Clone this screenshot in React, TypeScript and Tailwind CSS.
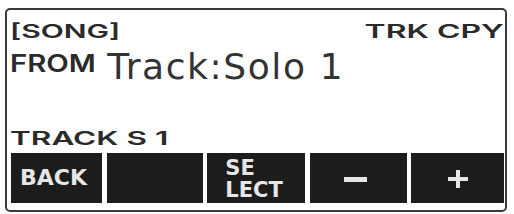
export default function App() {
  const lcd = { fontFamily: '"DejaVu Sans", "Liberation Sans", sans-serif' };
  const thin = { fontFamily: 'Inter, "DejaVu Sans", sans-serif' };

  return (
    <div className="w-[514px] h-[214px] bg-white overflow-hidden" style={lcd}>
      <div className="ml-[5px] mt-[8px] w-[502px] h-[204px] border-2 border-[#3a3a3a] rounded-[5px] flex flex-col pl-[3px] pr-[1px] text-[#2a2a2a]">
        <div className="mt-[12px] h-[19px] flex justify-between leading-none" style={thin}>
          <span className="inline-block text-[19px] font-semibold origin-left scale-x-[1.58]">[SONG]</span>
          <span className="inline-block text-[19px] font-semibold origin-right scale-x-[1.68]">TRK CPY</span>
        </div>

        <div className="mt-[8px] h-[36px] flex items-start leading-none">
          <span className="inline-block mt-[3px] text-[24px] font-semibold origin-left scale-x-[1.22]" style={thin}>FROM</span>
          <span className="ml-[27px] text-[36px] text-[#333] tracking-[1.6px]">Track:Solo 1</span>
        </div>

        <div className="mt-[44px] h-[19px] leading-none" style={thin}>
          <span className="inline-block text-[19px] font-semibold origin-left scale-x-[1.66]">TRACK S 1</span>
        </div>

        <div className="mt-[5px] h-[50px] flex gap-[4.5px] ml-[1px]">
          <div className="w-[91px] bg-[#1c1c1c] flex items-center justify-center">
            <span className="text-[22px] font-bold text-[#e6e6e6] leading-none -ml-[6px]">BACK</span>
          </div>
          <div className="w-[96px] bg-[#1c1c1c]" />
          <div className="w-[98px] bg-[#1c1c1c] flex items-center justify-center">
            <span className="text-[21px] font-bold text-[#e6e6e6] leading-[22px] text-left -ml-[4px] mt-[2px]">
              SE
              <br />
              LECT
            </span>
          </div>
          <div className="w-[97px] bg-[#1c1c1c] flex items-center justify-center">
            <span className="block w-[23px] h-[5px] bg-[#e6e6e6] -ml-[5px] mt-[2px]" />
          </div>
          <div className="w-[93px] bg-[#1c1c1c] flex items-center justify-center">
            <span className="relative block w-[20px] h-[18px] mt-[2px]">
              <span className="absolute left-0 top-[7px] w-[20px] h-[4px] bg-[#e6e6e6]" />
              <span className="absolute left-[8px] top-0 w-[4px] h-[18px] bg-[#e6e6e6]" />
            </span>
          </div>
        </div>
      </div>
    </div>
  );
}
